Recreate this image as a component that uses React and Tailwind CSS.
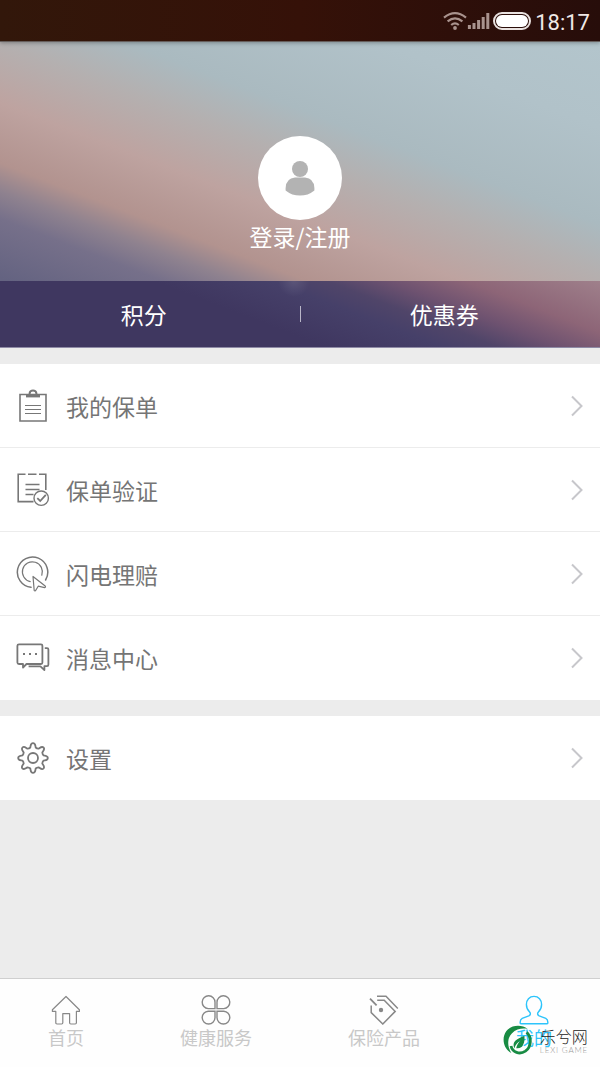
const policyItems = [
  { label: '我的保单', icon: ClipboardIcon },
  { label: '保单验证', icon: VerifyIcon },
  { label: '闪电理赔', icon: ClaimIcon },
  { label: '消息中心', icon: MessageIcon },
]

const tabs = [
  { label: '首页', icon: HomeIcon },
  { label: '健康服务', icon: CloverIcon },
  { label: '保险产品', icon: TagIcon },
  { label: '我的', icon: PersonIcon, active: true },
]

function ClipboardIcon() {
  return (
    <svg width="34" height="34" viewBox="0 0 34 34" fill="none" stroke="#777" strokeWidth="1.6">
      <path d="M4 5.5H30V32H4Z" />
      <path d="M10 7.2H24" strokeWidth="2.4" />
      <path d="M13.6 6.5V4.6a3.4 3.2 0 0 1 6.8 0V6.5" strokeWidth="2" />
      <path d="M9 16.5H25M9 20.5H25M9 24.5H25" strokeWidth="1.2" />
    </svg>
  )
}

function VerifyIcon() {
  return (
    <svg width="34" height="34" viewBox="0 0 34 34" fill="none" stroke="#777" strokeWidth="1.6">
      <path d="M9.5 1.2H2.2V28.6H17.5M12 1.2H20.5M23 1.2H29.8V17" />
      <path d="M9.5 11.5H23.5M9.5 16.5H23.5M9.5 21.5H17.5" strokeWidth="1.3" />
      <circle cx="25.2" cy="25.2" r="7.2" strokeWidth="1.4" />
      <path d="M21.3 25.2L24.2 28L29.8 21.8" strokeWidth="1.8" />
    </svg>
  )
}

function ClaimIcon() {
  return (
    <svg width="34" height="36" viewBox="0 0 34 36" fill="none" stroke="#777" strokeWidth="1.5" strokeLinejoin="round" strokeLinecap="round">
      <path d="M15 31.3A15.2 15.2 0 1 1 29.6 24" />
      <path d="M14.2 25.6A10 10 0 1 1 25.8 19.2" strokeWidth="1.2" />
      <path d="M17 20.5L18.2 34.5Q19 35.6 19.8 34.2L22.2 30.2L28.6 31.6Q30 31.2 29.2 30Z" strokeWidth="1.2" />
    </svg>
  )
}

function MessageIcon() {
  return (
    <svg width="34" height="30" viewBox="0 0 34 30" fill="none" stroke="#777" strokeWidth="1.8" strokeLinejoin="round">
      <path d="M3 1.4H25Q26.4 1.4 26.4 2.8V19.6Q26.4 21 25 21H10.5L7 24.6V21H3Q1.4 21 1.4 19.6V2.8Q1.4 1.4 3 1.4Z" />
      <path d="M28.8 5.2H31Q32.4 5.2 32.4 6.6V21.6Q32.4 23.2 31 23.2H28.4V27L24.4 23.4H12.6" />
      <path d="M7 11H9M13 11H15M19 11H21" strokeWidth="2" />
    </svg>
  )
}

function GearIcon() {
  return (
    <svg width="34" height="34" viewBox="0 0 34 34" fill="none" stroke="#777" strokeWidth="1.8" strokeLinejoin="round">
      <circle cx="17" cy="17" r="5" />
      <path d="M14.3 6.5C14.8 4.4 14.5 2.2 17 2.2S19.2 4.4 19.7 6.5C20.2 7 21.4 7.6 22.5 7.7C24.4 6.6 25.7 4.9 27.5 6.5S27.4 9.6 26.3 11.5C26.4 12.6 27 13.8 27.5 14.3C29.6 14.8 31.8 14.5 31.8 17S29.6 19.2 27.5 19.7C27 20.2 26.4 21.4 26.3 22.5C27.4 24.4 29.1 25.7 27.5 27.5S24.4 27.4 22.5 26.3C21.4 26.4 20.2 27 19.7 27.5C19.2 29.6 19.5 31.8 17 31.8S14.8 29.6 14.3 27.5C13.8 27 12.6 26.4 11.5 26.3C9.6 27.4 8.3 29.1 6.5 27.5S6.6 24.4 7.7 22.5C7.6 21.4 7 20.2 6.5 19.7C4.4 19.2 2.2 19.5 2.2 17S4.4 14.8 6.5 14.3C7 13.8 7.6 12.6 7.7 11.5C6.6 9.6 4.9 8.3 6.5 6.5S9.6 6.6 11.5 7.7C12.6 7.6 13.8 7 14.3 6.5Z" />
    </svg>
  )
}

function ChevronIcon() {
  return (
    <svg width="14" height="22" viewBox="0 0 14 22" fill="none" stroke="#c7c7cb" strokeWidth="2">
      <path d="M2 1.5L11.5 11L2 20.5" />
    </svg>
  )
}

function HomeIcon() {
  return (
    <svg width="30" height="30" viewBox="0 0 30 30" fill="none" stroke="#888" strokeWidth="1.2" strokeLinejoin="round">
      <path d="M15 1.5L28.4 14.8V16.4H25.4V27.8Q25.4 29 24.2 29H19.8Q18.6 29 18.6 27.8V18.6H11.8V27.8Q11.8 29 10.6 29H6Q4.8 29 4.8 27.8V16.4H1.4V14.8Z" />
    </svg>
  )
}

function CloverIcon() {
  return (
    <svg width="30" height="30" viewBox="0 0 30 30" fill="none" stroke="#888" strokeWidth="1.4">
      <path d="M14 13.6H7.2A6.4 6.4 0 1 1 14 7.2Z" />
      <path d="M16 13.6H22.8A6.4 6.4 0 1 0 16 7.2Z" />
      <path d="M14 16.2H7.2A6.4 6.4 0 1 0 14 22.8Z" />
      <path d="M16 16.2H22.8A6.4 6.4 0 1 1 16 22.8Z" />
    </svg>
  )
}

function TagIcon() {
  return (
    <svg width="30" height="30" viewBox="0 0 30 30" fill="none" stroke="#888" strokeWidth="1.5">
      <path d="M8.2 5.2H15.2L26.2 16.4L13.8 29L2.2 17.6V10.4" />
      <path d="M1 3.6L7.6 10.4" strokeWidth="1.8" />
      <path d="M8 1.2H17L28.8 13.4" />
      <circle cx="12" cy="15" r="2.2" fill="#888" stroke="none" />
    </svg>
  )
}

function PersonIcon() {
  return (
    <svg width="30" height="30" viewBox="0 0 30 30" fill="none" stroke="#2dc4fb" strokeWidth="1.4" strokeLinejoin="round">
      <path d="M15 1.4C10.4 1.4 7.4 4.8 7.4 9.4C7.4 13 8.6 15 10.6 17C12 18.6 11.4 20 9.8 20.8L3.2 23.4C1.2 24.4 1 26 1.2 28.2Q1.4 28.8 2.2 28.8H27.8Q28.6 28.8 28.8 28.2C29 26 28.8 24.4 26.8 23.4L20.2 20.8C18.6 20 18 18.6 19.4 17C21.4 15 22.6 13 22.6 9.4C22.6 4.8 19.6 1.4 15 1.4Z" />
    </svg>
  )
}

function StatusBar() {
  return (
    <header className="relative flex h-[42px] items-center justify-end border-b border-[#665e5c] bg-linear-to-r from-[#32170a] via-[#351108] to-[#270d0a] pr-[10px] shadow-[0_1px_4px_rgba(0,0,0,0.3)]">
      <svg width="48" height="20" viewBox="0 0 48 20" fill="none" stroke="#a9938e" strokeWidth="2.2">
        <path d="M1 6.6Q12 -2.4 23 6.6M4.6 10.4Q12 4.2 19.4 10.4M8.2 14Q12 10.8 15.8 14" />
        <circle cx="12" cy="17" r="1.9" fill="#a9938e" stroke="none" />
        <path d="M26.4 18V14M31 18V12M35.6 18V9M40.2 18V6M44.8 18V2" strokeWidth="3" />
      </svg>
      <div className="ml-[2px] h-[18px] w-[38px] rounded-full border-2 border-[#e9e2e0] p-[1px]">
        <div className="h-full rounded-full bg-white" />
      </div>
      <span className="ml-1 pt-1 font-[Roboto] text-[22px] leading-7 text-[#f0e9e7]">18:17</span>
    </header>
  )
}

function Profile() {
  return (
    <section className="bg-[linear-gradient(201deg,#b3c5cc_0px,#b1c2c9_80px,#aabac0_170px,#b4b0b0_215px,#bea3a0_272px,#b2938f_328px,#8f828f_354px,#76708a_380px,#646381_435px)]">
      <button className="flex h-[239px] w-full flex-col items-center pt-[94px] text-[23px] leading-8 text-white">
        <span className="flex size-[84px] shrink-0 items-center justify-center rounded-full bg-white">
          <svg width="30" height="36" viewBox="0 0 30 36" fill="#b3b3b3">
            <circle cx="15" cy="9" r="8" />
            <path d="M10 17.4H20Q29 18 29.4 28V30.4Q23 35.6 15 35.6T.6 30.4V28Q1 18 10 17.4Z" />
          </svg>
        </span>
        登录/注册
      </button>
      <div className="flex h-[67px] items-center border-b border-[#8f8ba6] bg-[radial-gradient(circle_at_49%_0%,rgba(255,255,255,0.1),transparent_16px),linear-gradient(201deg,#9f808b_0px,#8d6577_48px,#6e5270_76px,#504569_98px,#464069_118px,#3f3760_160px)] text-[23px] text-white">
        <button className="h-full flex-1 pr-3">积分</button>
        <span className="h-4 w-px bg-[#b9b6c8]" />
        <button className="h-full flex-1 pr-3">优惠券</button>
      </div>
    </section>
  )
}

function MenuRow({ label, icon: Icon }) {
  return (
    <li className="border-b border-[#ececec] bg-white last:border-white">
      <button className="flex h-[83px] w-full items-center px-4 text-[23px] text-[#757575]">
        <span className="flex w-[50px] items-center"><Icon /></span>
        <span className="flex-1 pt-0.5 text-left">{label}</span>
        <ChevronIcon />
      </button>
    </li>
  )
}

function Watermark() {
  return (
    <div className="pointer-events-none absolute right-3 bottom-3 flex items-center gap-2 text-[#222]">
      <svg width="30" height="30" viewBox="0 0 30 30">
        <path fill="#188b43" d="M25.6 4C20 -.6 9.6 -.4 4.4 6C-.8 13 1.4 23.6 9.4 28C5.4 22 4.8 13.4 9.8 8.4C14.4 3.8 20.6 3 25.6 4Z" />
        <path fill="none" stroke="#188b43" strokeWidth="2.8" d="M24.6 7.4C30 12.4 29.4 22 23.4 26.2C17.6 30 10.4 27.4 9 21" />
        <path fill="#188b43" d="M12.4 23.4C9.6 16.6 14.4 14.2 22.4 10.8C23.2 17.6 20.8 24.4 14.2 23.2C14.8 20 16.4 17.4 18.6 15.2C15.4 17.4 13.2 20 12.4 23.4Z" />
      </svg>
      <div className="flex flex-col">
        <span className="text-[16px] leading-5 font-light">乐兮网</span>
        <span className="font-[Lato] text-[8px] leading-2 font-light tracking-widest text-[#999]">LEXI GAME</span>
      </div>
    </div>
  )
}

function TabBar() {
  return (
    <nav className="relative flex h-[89px] justify-around border-t border-[#cfcfcf] bg-[#fefefe] pt-4">
      {tabs.map(({ label, icon: Icon, active }) => (
        <a
          key={label}
          href="#"
          className={active ? 'flex flex-col items-center text-[18px] leading-6 text-[#2dc4fb]' : 'flex flex-col items-center text-[18px] leading-6 text-[#c8c8c8]'}
        >
          <Icon />
          {label}
        </a>
      ))}
      <Watermark />
    </nav>
  )
}

export default function App() {
  return (
    <div className="flex min-h-screen flex-col bg-[#ececec] font-['Noto_Sans_CJK_SC',sans-serif]">
      <StatusBar />
      <main className="flex flex-1 flex-col gap-4">
        <Profile />
        <ul>
          {policyItems.map((item) => <MenuRow key={item.label} {...item} />)}
        </ul>
        <ul>
          <MenuRow label="设置" icon={GearIcon} />
        </ul>
      </main>
      <TabBar />
    </div>
  )
}
